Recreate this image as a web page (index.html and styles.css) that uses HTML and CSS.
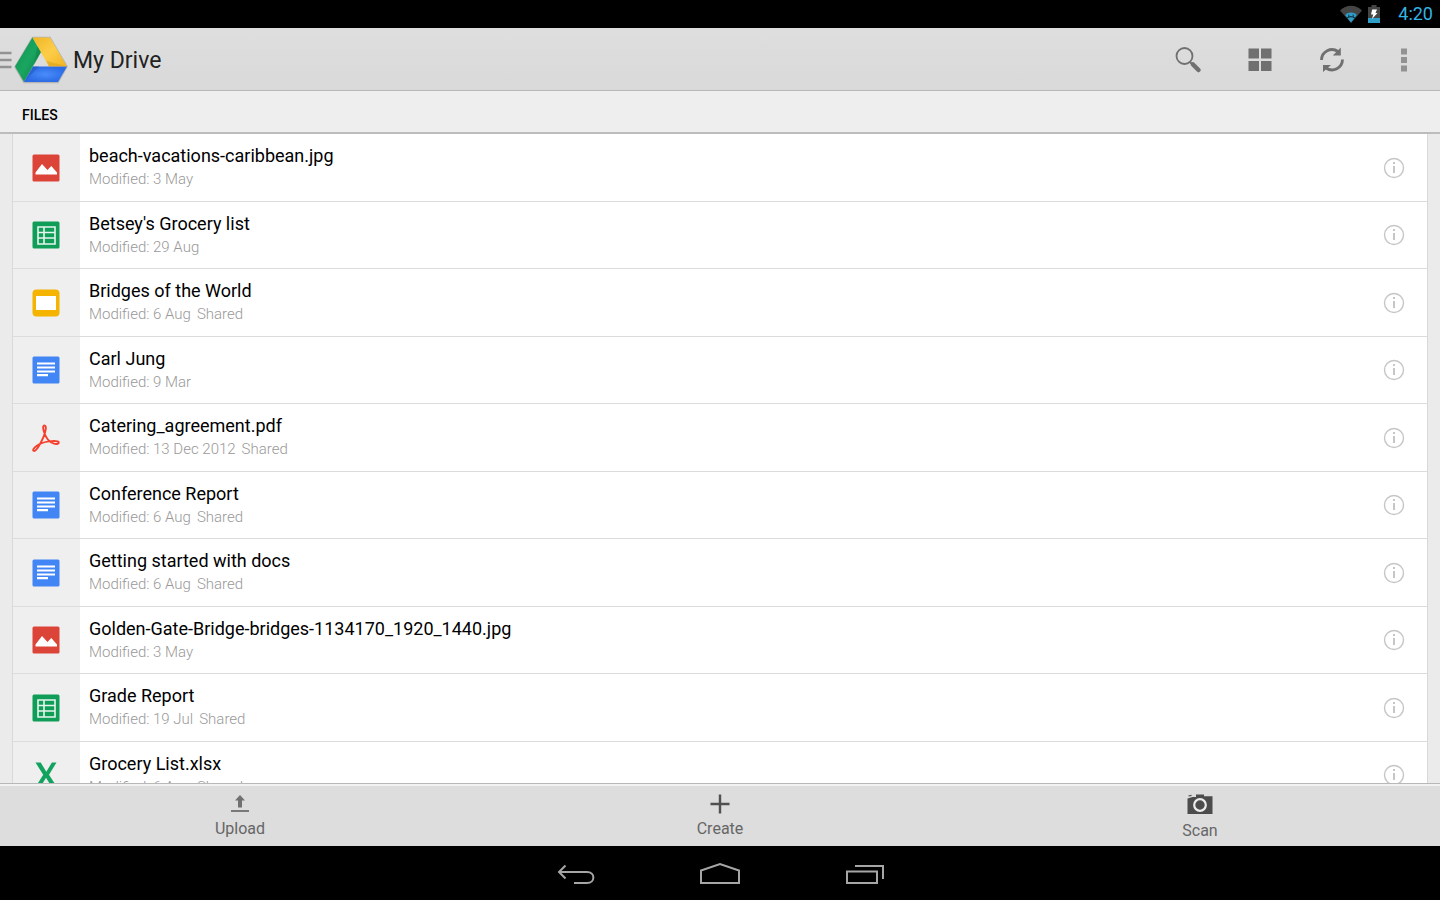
FILE: index.html
```html
<!DOCTYPE html>
<html lang="en">
<head>
    <meta charset="UTF-8">
    <meta name="viewport" content="width=device-width, initial-scale=1.0">
    <title>My Drive</title>
    <link rel="stylesheet" href="styles.css">
</head>
<body>
    <!-- shared icons -->
    <svg class="icon_defs" aria-hidden="true">
        <symbol id="icon-image" viewBox="0 0 28 28">
            <rect x="0.5" y="0.5" width="27" height="27" rx="1.5" fill="#db4437"/>
            <path d="M3.5 20.500V18.500L10 10l5.500 6 3.800-4 5.700 6.500v2z" fill="#fff"/>
        </symbol>
        <symbol id="icon-sheet" viewBox="0 0 28 28">
            <rect x="0.500" y="0.500" width="27" height="27" rx="1.500" fill="#0f9d58"/>
            <path d="M6 6h17v17H6zM6 11.500h17M6 17h17M12 6v17" fill="none" stroke="#e8f5ee" stroke-width="1.600"/>
        </symbol>
        <symbol id="icon-slides" viewBox="0 0 28 28">
            <rect x="0.500" y="0.500" width="27" height="27" rx="4" fill="#f4b400"/>
            <rect x="4" y="7" width="20" height="14" fill="#fff"/>
        </symbol>
        <symbol id="icon-doc" viewBox="0 0 28 28">
            <rect x="0.500" y="0.500" width="27" height="27" rx="1.500" fill="#4285f4"/>
            <path d="M5 7.500h18M5 11.500h18M5 15.500h18M5 19.200h11" stroke="#fff" stroke-width="2.200"/>
        </symbol>
        <symbol id="icon-pdf" viewBox="0 0 28 28">
            <path d="M12.500 1.500c-2 0-1.500 3.500-.3 7 1.500 4.500 5 10 9.800 11.200 3 .8 5-.2 4.700-1.400-.4-1.500-4.700-1.500-9.700-.9-5 .6-9 2-12.500 4.500-2.500 1.800-4 4-3 4.900 1.200 1 4-2 6.500-6.800 2.500-4.500 4.500-9 5.300-12.500.8-3.500.8-6-.8-6z" fill="none" stroke="#f4412d" stroke-width="1.900" stroke-linejoin="round"/>
        </symbol>
        <symbol id="icon-excel" viewBox="0 0 28 28">
            <path d="M3.500 1.500h5.200l5.600 9.200 5.600-9.200h4.600l-7.500 12.200 8.300 12.800h-5.200L14 16.800 8.100 26.500H3.200l8-12.800z" fill="#12a35f"/>
        </symbol>
        <symbol id="icon-info" viewBox="0 0 22 22">
            <circle cx="11" cy="11" r="9.500" fill="none" stroke="#c6c6c6" stroke-width="1.400"/>
            <path d="M11 5v2M11 9v7" stroke="#c0c0c0" stroke-width="1.800"/>
        </symbol>
    </svg>

    <div class="status_bar">
        <svg class="status_wifi" viewBox="0 0 22 18" role="img" aria-label="Wi-Fi">
            <path d="M0 5.500C6-.8 16-.8 22 5.500L11 18z" fill="#454545"/>
            <path d="M5.200 10c3.300-3.200 8.300-3.200 11.600 0L11 17.500z" fill="#2f9fc9"/>
            <path d="M7 13.300c2.400-2 5.600-2 8 0" fill="none" stroke="#0b3545" stroke-width="1.300"/>
            <path d="M8.800 9.500v2.500M13.200 9.500v2.500" stroke="#0b3545" stroke-width="1"/>
        </svg>
        <svg class="status_battery" viewBox="0 0 12 18" role="img" aria-label="Battery charging">
            <path d="M3.500 0h5v2H12v16H0V2h3.500z" fill="#454545"/>
            <path d="M0 13h12v5H0z" fill="#2f9fc9"/>
            <path d="M4.200 4.500H9L7.500 8h2L4 14l1.200-4.500H3z" fill="#fff"/>
        </svg>
        <span class="status_time">4:20</span>
    </div>

    <header class="action_bar">
        <button class="drive_home" type="button" aria-label="Open navigation">
            <svg class="menu_icon" viewBox="0 0 12 18">
                <path d="M0 2h11.500M0 9h11.500M0 16h11.500" stroke="#929292" stroke-width="2.400"/>
            </svg>
            <svg class="drive_logo" viewBox="0 0 54 48">
                <defs>
                    <linearGradient id="green" x1="0" y1="0" x2="1" y2="1">
                        <stop offset="0" stop-color="#0c8f4d"/>
                        <stop offset="0.500" stop-color="#1aa660"/>
                        <stop offset="1" stop-color="#0b8043"/>
                    </linearGradient>
                    <linearGradient id="yellow" x1="0" y1="0" x2="1" y2="1">
                        <stop offset="0" stop-color="#efb526"/>
                        <stop offset="0.500" stop-color="#fdcd48"/>
                        <stop offset="1" stop-color="#f0b323"/>
                    </linearGradient>
                    <radialGradient id="blue">
                        <stop offset="0" stop-color="#4a8cfb"/>
                        <stop offset="1" stop-color="#2c6be4"/>
                    </radialGradient>
                </defs>
                <path d="M18.500 1.500h17.500L53 30.500 44 46.500H10L1 31z" fill="none" stroke="#b5b5b5" stroke-width="1.500"/>
                <path d="M27 16l8 14.500H19z" fill="#dcdcdc"/>
                <path d="M18.500 1.500L27 16 10 46 1 30.500z" fill="url(#green)"/>
                <path d="M18.500 1.500h17.500L53 30.500H35z" fill="url(#yellow)"/>
                <path d="M19 30.500h34L44 46H10z" fill="url(#blue)"/>
                <path d="M27 16l-3.600-6L20 29z" fill="#0b7a3f" opacity="0.400"/>
                <path d="M35 30.500L32.500 25 53 30.500z" fill="#d99b18" opacity="0.500"/>
                <path d="M19 30.500L10 46l15-15.500z" fill="#1f55bd" opacity="0.500"/>
            </svg>
        </button>
        <h1 class="page_title">My Drive</h1>
        <button class="action_btn" type="button" aria-label="Search">
            <svg class="action_icon" viewBox="0 0 28 28">
                <circle cx="10.500" cy="10" r="8" fill="none" stroke="#707070" stroke-width="1.800"/>
                <path d="M16 16l3 3" stroke="#707070" stroke-width="2"/>
                <path d="M19 18.500l5.500 5.500" stroke="#707070" stroke-width="4.500" stroke-linecap="round"/>
            </svg>
        </button>
        <button class="action_btn" type="button" aria-label="Grid view">
            <svg class="action_icon" viewBox="0 0 28 28">
                <path d="M2.500 2.500h10.500v10H2.500zM15 2.500h10.500v10H15zM2.500 15h10.500v10H2.500zM15 15h10.500v10H15z" fill="#707070"/>
            </svg>
        </button>
        <button class="action_btn" type="button" aria-label="Refresh">
            <svg class="action_icon" viewBox="0 0 28 28">
                <path d="M3.500 14A10.500 10.500 0 0 1 20 5.500M24.500 13.500A10.500 10.500 0 0 1 8 22" fill="none" stroke="#707070" stroke-width="2.800"/>
                <path d="M22.800 1.500v8h-8zM5 26v-7h8z" fill="#707070"/>
            </svg>
        </button>
        <button class="action_btn" type="button" aria-label="More options">
            <svg class="action_icon" viewBox="0 0 28 28">
                <path d="M11 2.500h6v6h-6zM11 11h6v6h-6zM11 19.500h6v6h-6z" fill="#929292"/>
            </svg>
        </button>
    </header>

    <h2 class="section_title">FILES</h2>

    <main class="file_area">
        <ul class="file_list">
            <li class="file_row">
                <span class="file_type"><svg class="file_icon"><use href="#icon-image"/></svg></span>
                <div class="file_text">
                    <span class="file_name">beach-vacations-caribbean.jpg</span>
                    <span class="file_meta">Modified: 3 May</span>
                </div>
                <button class="info_btn" type="button" aria-label="Details"><svg class="info_icon"><use href="#icon-info"/></svg></button>
            </li>
            <li class="file_row">
                <span class="file_type"><svg class="file_icon"><use href="#icon-sheet"/></svg></span>
                <div class="file_text">
                    <span class="file_name">Betsey's Grocery list</span>
                    <span class="file_meta">Modified: 29 Aug</span>
                </div>
                <button class="info_btn" type="button" aria-label="Details"><svg class="info_icon"><use href="#icon-info"/></svg></button>
            </li>
            <li class="file_row">
                <span class="file_type"><svg class="file_icon"><use href="#icon-slides"/></svg></span>
                <div class="file_text">
                    <span class="file_name">Bridges of the World</span>
                    <span class="file_meta">Modified: 6 Aug<span class="file_shared">Shared</span></span>
                </div>
                <button class="info_btn" type="button" aria-label="Details"><svg class="info_icon"><use href="#icon-info"/></svg></button>
            </li>
            <li class="file_row">
                <span class="file_type"><svg class="file_icon"><use href="#icon-doc"/></svg></span>
                <div class="file_text">
                    <span class="file_name">Carl Jung</span>
                    <span class="file_meta">Modified: 9 Mar</span>
                </div>
                <button class="info_btn" type="button" aria-label="Details"><svg class="info_icon"><use href="#icon-info"/></svg></button>
            </li>
            <li class="file_row">
                <span class="file_type"><svg class="file_icon"><use href="#icon-pdf"/></svg></span>
                <div class="file_text">
                    <span class="file_name">Catering_agreement.pdf</span>
                    <span class="file_meta">Modified: 13 Dec 2012<span class="file_shared">Shared</span></span>
                </div>
                <button class="info_btn" type="button" aria-label="Details"><svg class="info_icon"><use href="#icon-info"/></svg></button>
            </li>
            <li class="file_row">
                <span class="file_type"><svg class="file_icon"><use href="#icon-doc"/></svg></span>
                <div class="file_text">
                    <span class="file_name">Conference Report</span>
                    <span class="file_meta">Modified: 6 Aug<span class="file_shared">Shared</span></span>
                </div>
                <button class="info_btn" type="button" aria-label="Details"><svg class="info_icon"><use href="#icon-info"/></svg></button>
            </li>
            <li class="file_row">
                <span class="file_type"><svg class="file_icon"><use href="#icon-doc"/></svg></span>
                <div class="file_text">
                    <span class="file_name">Getting started with docs</span>
                    <span class="file_meta">Modified: 6 Aug<span class="file_shared">Shared</span></span>
                </div>
                <button class="info_btn" type="button" aria-label="Details"><svg class="info_icon"><use href="#icon-info"/></svg></button>
            </li>
            <li class="file_row">
                <span class="file_type"><svg class="file_icon"><use href="#icon-image"/></svg></span>
                <div class="file_text">
                    <span class="file_name">Golden-Gate-Bridge-bridges-1134170_1920_1440.jpg</span>
                    <span class="file_meta">Modified: 3 May</span>
                </div>
                <button class="info_btn" type="button" aria-label="Details"><svg class="info_icon"><use href="#icon-info"/></svg></button>
            </li>
            <li class="file_row">
                <span class="file_type"><svg class="file_icon"><use href="#icon-sheet"/></svg></span>
                <div class="file_text">
                    <span class="file_name">Grade Report</span>
                    <span class="file_meta">Modified: 19 Jul<span class="file_shared">Shared</span></span>
                </div>
                <button class="info_btn" type="button" aria-label="Details"><svg class="info_icon"><use href="#icon-info"/></svg></button>
            </li>
            <li class="file_row">
                <span class="file_type"><svg class="file_icon"><use href="#icon-excel"/></svg></span>
                <div class="file_text">
                    <span class="file_name">Grocery List.xlsx</span>
                    <span class="file_meta">Modified: 6 Aug<span class="file_shared">Shared</span></span>
                </div>
                <button class="info_btn" type="button" aria-label="Details"><svg class="info_icon"><use href="#icon-info"/></svg></button>
            </li>
        </ul>
    </main>

    <footer class="tool_bar">
        <button class="tool_btn" type="button">
            <svg class="tool_icon" viewBox="0 0 28 20">
                <path d="M14 1l5 5.500h-3V13.500h-4V6.500H9z" fill="#707070"/>
                <path d="M5 17h18" stroke="#606060" stroke-width="1.600"/>
            </svg>
            Upload
        </button>
        <button class="tool_btn" type="button">
            <svg class="tool_icon" viewBox="0 0 28 20">
                <path d="M14 .5v19M4.500 10h19" stroke="#505050" stroke-width="2.400"/>
            </svg>
            Create
        </button>
        <button class="tool_btn" type="button">
            <svg class="tool_icon tool_icon_scan" viewBox="0 0 28 22">
                <path d="M1.500 4.500l5-1.500H10V.500h8v1.800h8.500V20h-25z" fill="#4c4c4c"/>
                <path d="M2.500 2l3-.7" stroke="#4c4c4c" stroke-width="1.200"/>
                <circle cx="14" cy="11" r="5.800" fill="none" stroke="#ececec" stroke-width="2.200"/>
            </svg>
            Scan
        </button>
    </footer>

    <nav class="nav_bar">
        <button class="nav_btn" type="button" aria-label="Back">
            <svg class="nav_icon" viewBox="0 0 40 24">
                <path d="M9.500 3.500L3 10l6.500 6.500M3 10h28c8.500 0 8.500 11 0 11H18" fill="none" stroke="#a6a6a6" stroke-width="2"/>
            </svg>
        </button>
        <button class="nav_btn" type="button" aria-label="Home">
            <svg class="nav_icon" viewBox="0 0 40 24">
                <path d="M1 21V8.500L20 2l19 6.500V21z" fill="none" stroke="#a6a6a6" stroke-width="2"/>
            </svg>
        </button>
        <button class="nav_btn" type="button" aria-label="Recent apps">
            <svg class="nav_icon" viewBox="0 0 40 24">
                <path d="M3 9.500h30V21H3z" fill="none" stroke="#a6a6a6" stroke-width="2"/>
                <path d="M11 4h28v13" fill="none" stroke="#a6a6a6" stroke-width="2"/>
            </svg>
        </button>
    </nav>
</body>
</html>
```
FILE: styles.css
```css
html,body{
    margin:0;
    padding:0;
    height:100%;
}
body{
    display:flex;
    flex-direction:column;
    background:#ebebeb;
    font-family:Roboto, "Noto Sans", sans-serif;
    color:#000;
    overflow:hidden;
}
button{
    display:flex;
    align-items:center;
    justify-content:center;
    margin:0;
    padding:0;
    border:0;
    background:none;
    font-family:inherit;
    cursor:pointer;
}
svg{
    display:block;
    flex:none;
}
.icon_defs{
    position:absolute;
    width:0;
    height:0;
}
/* status bar */
.status_bar{
    display:flex;
    flex:none;
    align-items:center;
    justify-content:flex-end;
    height:28px;
    padding-right:7px;
    background:#000;
}
.status_wifi{
    width:22px;
    height:18px;
}
.status_battery{
    width:12px;
    height:18px;
    margin:0 18px 0 6px;
}
.status_time{
    font-size:18px;
    line-height:30px;
    color:#33b5e5;
}
/* action bar */
.action_bar{
    display:flex;
    flex:none;
    box-sizing:border-box;
    height:63px;
    padding-top:2px;
    border-bottom:1px solid #b8b8b8;
    background:linear-gradient(#dedede, #d9d9d9);
}
.menu_icon{
    width:12px;
    height:18px;
}
.drive_logo{
    width:54px;
    height:48px;
    margin-left:2px;
}
.page_title{
    flex:1;
    margin:0 0 0 5px;
    font-size:23px;
    font-weight:400;
    line-height:62px;
    color:#222;
}
.action_btn{
    width:72px;
}
.action_icon{
    width:28px;
    height:28px;
}
/* file list */
.section_title{
    flex:none;
    box-sizing:border-box;
    height:43px;
    margin:0;
    padding-left:22px;
    border-bottom:2px solid #bcbcbc;
    background:#eee;
    font-size:14px;
    font-weight:500;
    line-height:48px;
}
.file_area{
    flex:1;
    min-height:0;
    padding:0 12px;
    overflow:hidden;
}
.file_list{
    margin:0;
    padding:0;
    border:1px solid #d9d9d9;
    border-width:0 1px;
    background:#fff;
    list-style:none;
}
.file_row{
    display:flex;
    box-sizing:border-box;
    height:68px;
    border-bottom:1px solid #dcdcdc;
}
.file_row:nth-child(even){
    height:67px;
}
.file_type{
    display:flex;
    align-items:center;
    justify-content:center;
    box-sizing:border-box;
    width:67px;
    padding-right:1px;
    background:#efefef;
}
.file_icon{
    width:28px;
    height:28px;
}
.file_text{
    display:flex;
    flex:1;
    flex-direction:column;
    padding:10px 0 0 9px;
}
.file_name{
    font-size:18px;
    line-height:24px;
}
.file_meta{
    font-size:15px;
    font-weight:300;
    line-height:22px;
    color:#999;
}
.file_shared{
    margin-left:6px;
}
.info_btn{
    width:67px;
}
.info_icon{
    width:22px;
    height:22px;
}
/* bottom tools */
.tool_bar{
    display:grid;
    flex:none;
    grid-template-columns:repeat(3, 1fr);
    box-sizing:border-box;
    height:63px;
    border-top:1px solid #b8b8b8;
    box-shadow:inset 0 2px #f2f2f2;
    background:#ddd;
}
.tool_btn{
    flex-direction:column;
    justify-content:flex-start;
    gap:4px;
    padding-top:10px;
    font-size:16px;
    line-height:22px;
    color:#666;
}
.tool_icon{
    width:28px;
    height:20px;
}
.tool_icon_scan{
    height:22px;
}
/* system navigation */
.nav_bar{
    display:flex;
    flex:none;
    box-sizing:border-box;
    justify-content:center;
    height:54px;
    padding-top:2px;
    background:#000;
}
.nav_btn{
    width:144px;
}
.nav_icon{
    width:40px;
    height:24px;
}
```
